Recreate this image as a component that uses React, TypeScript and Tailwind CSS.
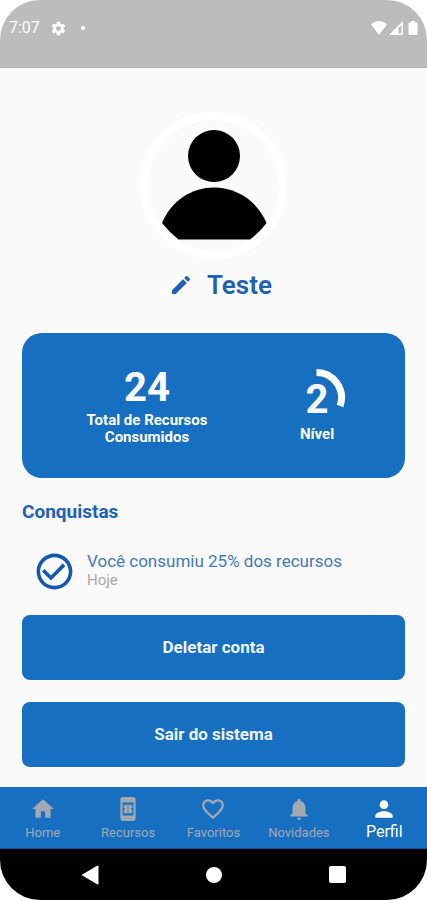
import type { ReactNode } from 'react';
import {
  MdBookOnline,
  MdCheckCircleOutline,
  MdEdit,
  MdFavoriteBorder,
  MdHome,
  MdNotifications,
  MdPerson,
  MdSettings,
} from 'react-icons/md';
import type { IconType } from 'react-icons';

const tabs: { label: string; icon: IconType; active?: boolean }[] = [
  { label: 'Home', icon: MdHome },
  { label: 'Recursos', icon: MdBookOnline },
  { label: 'Favoritos', icon: MdFavoriteBorder },
  { label: 'Novidades', icon: MdNotifications },
  { label: 'Perfil', icon: MdPerson, active: true },
];

function StatusBar() {
  return (
    <header className="flex h-[68px] items-start justify-between border-b border-[#adadad] bg-[#bcbcbc] pt-4 pr-2 pl-[9px] text-white">
      <div className="flex h-6 items-center">
        <span className="text-base">7:07</span>
        <MdSettings size={17} className="ml-2.5" />
        <span className="ml-3.5 size-1 rounded-full bg-white" />
      </div>
      <div className="flex h-6 items-center">
        {/* Wi-Fi */}
        <svg width="16" height="14" viewBox="0 0 16 14" fill="currentColor">
          <path d="M0 3.5C2.2 1.2 5 0 8 0s5.800 1.200 8 3.500L8 14z" />
        </svg>
        {/* Sinal */}
        <svg width="14" height="14" viewBox="0 0 14 14" className="ml-0.5">
          <path d="M14 0v14H0z" fill="#fff" />
          <path d="M12.500 4v8.500H9.500V7z" fill="#bcbcbc" />
        </svg>
        {/* Bateria */}
        <svg width="12" height="14" viewBox="0 0 12 14" fill="currentColor" className="ml-1">
          <path d="M4 0h4v1.500h1.500q1 0 1 1V13q0 1-1 1h-7q-1 0-1-1V2.500q0-1 1-1H4z" />
        </svg>
      </div>
    </header>
  );
}

function Avatar() {
  return (
    <div className="size-[147px] rounded-full border-[8px] border-white">
      <svg viewBox="0 0 131 131" className="size-full" aria-label="Foto de perfil">
        <circle cx="66" cy="36" r="26" />
        <path d="M14 103C23 81 43.500 67.500 66 67.500S109.500 81 118.500 103Q112 112 102 119.500H30.500Q21 112 14 103z" />
      </svg>
    </div>
  );
}

function ActionButton({ children }: { children: ReactNode }) {
  return (
    <button
      type="button"
      className="h-[65px] w-full rounded-lg bg-[#176fc1] text-[17px] font-bold text-[#eef3ff]"
    >
      {children}
    </button>
  );
}

function TabBar() {
  return (
    <nav className="grid h-[62px] grid-cols-5 border-b border-[#0c5299] bg-[#176fc1]">
      {tabs.map(({ label, icon: Icon, active }) => (
        <a
          key={label}
          href="#"
          aria-current={active ? 'page' : undefined}
          className={
            active
              ? 'flex flex-col items-center pt-[9px] text-base leading-5 text-white'
              : 'flex flex-col items-center pt-[9px] text-[13px] leading-[22px] text-[#a3a9b0]'
          }
        >
          <Icon size={26} />
          {label}
        </a>
      ))}
    </nav>
  );
}

function SystemBar() {
  return (
    <div className="grid h-[51px] grid-cols-[179px_1fr_179px] items-center bg-black text-white">
      <button type="button" aria-label="Voltar" className="justify-self-center">
        <svg width="18" height="20" viewBox="0 0 18 20" fill="currentColor">
          <path d="M.5 10L16.500 .6Q17.500 .3 17.500 1.200v17.600q0 .9-1 .6z" />
        </svg>
      </button>
      <button
        type="button"
        aria-label="Início"
        className="size-4 justify-self-center rounded-full bg-white"
      />
      <button
        type="button"
        aria-label="Recentes"
        className="size-[17px] justify-self-center rounded-xs bg-white"
      />
    </div>
  );
}

export default function App() {
  return (
    <div className="min-h-screen bg-white font-['Roboto',sans-serif]">
      <div className="flex min-h-screen flex-col overflow-hidden rounded-[40px] bg-[#fafafa]">
        <StatusBar />

        <main className="flex flex-1 flex-col px-[22px] pt-11 pb-5">
          <section className="flex flex-col items-center">
            <Avatar />
            <div className="mt-2 flex items-center gap-3.5 pl-3.5 text-[#1b62b8]">
              <button type="button" aria-label="Editar nome">
                <MdEdit size={24} />
              </button>
              <h1 className="text-[26px] leading-9 font-semibold">Teste</h1>
            </div>
          </section>

          <section className="mt-[30px] flex h-[145px] items-center rounded-[20px] bg-[#176fc1] pt-0.5 font-bold text-white">
            <div className="flex w-[250px] flex-col items-center text-center">
              <span className="text-[40px] leading-10">24</span>
              <span className="mt-1 w-32 text-[15px] leading-[17px]">
                Total de Recursos Consumidos
              </span>
            </div>
            <div className="flex w-[90px] flex-col items-center">
              <div className="relative flex h-[50px] items-end">
                <span className="text-[40px] leading-10">2</span>
                {/* Progresso do nível */}
                <svg
                  width="60"
                  height="60"
                  viewBox="0 0 60 60"
                  fill="none"
                  className="absolute -top-0.5 -left-5"
                >
                  <path
                    d="M30.500 4.500A25 25 0 0 1 54 38"
                    stroke="currentColor"
                    strokeWidth="7"
                  />
                </svg>
              </div>
              <span className="mt-1.5 text-[15px] leading-[17px]">Nível</span>
            </div>
          </section>

          <section>
            <h2 className="mt-5 text-[19px] leading-7 font-bold text-[#1b62b8]">
              Conquistas
            </h2>
            <div className="mt-6 mb-[22px] flex items-center pl-[11px]">
              <MdCheckCircleOutline size={43} className="text-[#1259b5]" />
              <div className="ml-[11px] pb-1">
                <p className="text-[17px] leading-5 text-[#4178c6]">
                  Você consumiu 25% dos recursos
                </p>
                <p className="text-[15px] leading-[18px] text-[#a8a8a8]">Hoje</p>
              </div>
            </div>
          </section>

          <div className="mt-auto flex flex-col gap-[22px]">
            <ActionButton>Deletar conta</ActionButton>
            <ActionButton>Sair do sistema</ActionButton>
          </div>
        </main>

        <TabBar />
        <SystemBar />
      </div>
    </div>
  );
}
